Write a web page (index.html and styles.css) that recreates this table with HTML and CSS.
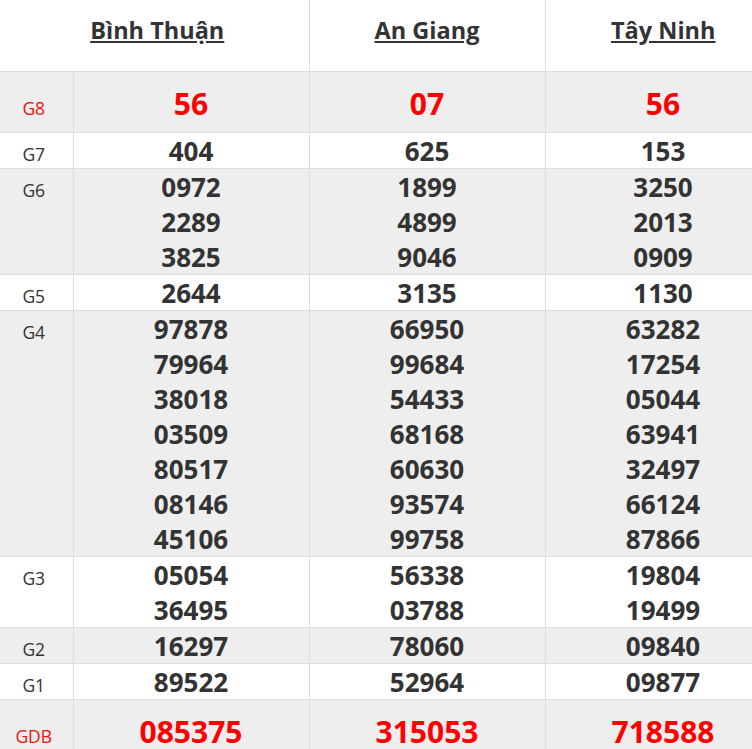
FILE: index.html
```html
<!DOCTYPE html>
<html lang="vi">
<head>
<meta charset="utf-8">
<title>Kết quả xổ số</title>
<link rel="stylesheet" href="styles.css">
</head>
<body>
<table class="kq">
  <colgroup>
    <col class="c-label">
    <col class="c-prov">
    <col class="c-prov">
    <col class="c-prov">
  </colgroup>
  <thead>
    <tr>
      <th colspan="2" class="h-first"><a href="#">Bình Thuận</a></th>
      <th><a href="#">An Giang</a></th>
      <th><a href="#">Tây Ninh</a></th>
    </tr>
  </thead>
  <tbody>
    <tr class="gray big">
      <td class="lbl red">G8</td>
      <td><div class="n red">56</div></td>
      <td><div class="n red">07</div></td>
      <td><div class="n red">56</div></td>
    </tr>
    <tr>
      <td class="lbl">G7</td>
      <td><div class="n">404</div></td>
      <td><div class="n">625</div></td>
      <td><div class="n">153</div></td>
    </tr>
    <tr class="gray">
      <td class="lbl">G6</td>
      <td><div class="n">0972</div><div class="n">2289</div><div class="n">3825</div></td>
      <td><div class="n">1899</div><div class="n">4899</div><div class="n">9046</div></td>
      <td><div class="n">3250</div><div class="n">2013</div><div class="n">0909</div></td>
    </tr>
    <tr>
      <td class="lbl">G5</td>
      <td><div class="n">2644</div></td>
      <td><div class="n">3135</div></td>
      <td><div class="n">1130</div></td>
    </tr>
    <tr class="gray">
      <td class="lbl">G4</td>
      <td><div class="n">97878</div><div class="n">79964</div><div class="n">38018</div><div class="n">03509</div><div class="n">80517</div><div class="n">08146</div><div class="n">45106</div></td>
      <td><div class="n">66950</div><div class="n">99684</div><div class="n">54433</div><div class="n">68168</div><div class="n">60630</div><div class="n">93574</div><div class="n">99758</div></td>
      <td><div class="n">63282</div><div class="n">17254</div><div class="n">05044</div><div class="n">63941</div><div class="n">32497</div><div class="n">66124</div><div class="n">87866</div></td>
    </tr>
    <tr>
      <td class="lbl">G3</td>
      <td><div class="n">05054</div><div class="n">36495</div></td>
      <td><div class="n">56338</div><div class="n">03788</div></td>
      <td><div class="n">19804</div><div class="n">19499</div></td>
    </tr>
    <tr class="gray">
      <td class="lbl">G2</td>
      <td><div class="n">16297</div></td>
      <td><div class="n">78060</div></td>
      <td><div class="n">09840</div></td>
    </tr>
    <tr>
      <td class="lbl">G1</td>
      <td><div class="n">89522</div></td>
      <td><div class="n">52964</div></td>
      <td><div class="n">09877</div></td>
    </tr>
    <tr class="gray big">
      <td class="lbl red">GDB</td>
      <td><div class="n red">085375</div></td>
      <td><div class="n red">315053</div></td>
      <td><div class="n red">718588</div></td>
    </tr>
  </tbody>
</table>
</body>
</html>
```

FILE: styles.css
```css
html, body {
  margin: 0;
  padding: 0;
  overflow: hidden;
  background: #fff;
}
body {
  font-family: "Open Sans", "Noto Sans", sans-serif;
  color: #333;
}
.kq {
  border-collapse: collapse;
  table-layout: fixed;
  width: 781px;
}
.c-label { width: 73px; }
.c-prov { width: 236px; }
.kq th {
  height: 71px;
  padding: 0 0 10px;
  box-sizing: border-box;
  text-align: center;
  vertical-align: middle;
  border-bottom: 1px solid #ddd;
  border-left: 1px solid #ddd;
  font-size: 23.5px;
  font-weight: 700;
}
.kq th.h-first {
  border-left: none;
  padding-left: 6px;
}
.kq th a {
  color: #333;
  text-decoration: underline;
}
.kq td {
  padding: 0;
  text-align: center;
  vertical-align: baseline;
  border: 1px solid #ddd;
  border-top: none;
}
.kq td:first-child { border-left: none; }
.kq tr.gray td { background: #eee; }
.kq td.lbl {
  font-size: 17.5px;
  color: #333;
  padding-right: 5px;
}
.n {
  font-size: 26px;
  font-weight: 700;
  line-height: 35px;
  padding-top: 1px;
  margin-bottom: -1px;
}
.kq .big td { padding-top: 13px; padding-bottom: 11px; }
.big .n {
  font-size: 30px;
  line-height: 36px;
}
.red { color: #f00; }
.kq td.lbl.red { color: #e11; }
```
